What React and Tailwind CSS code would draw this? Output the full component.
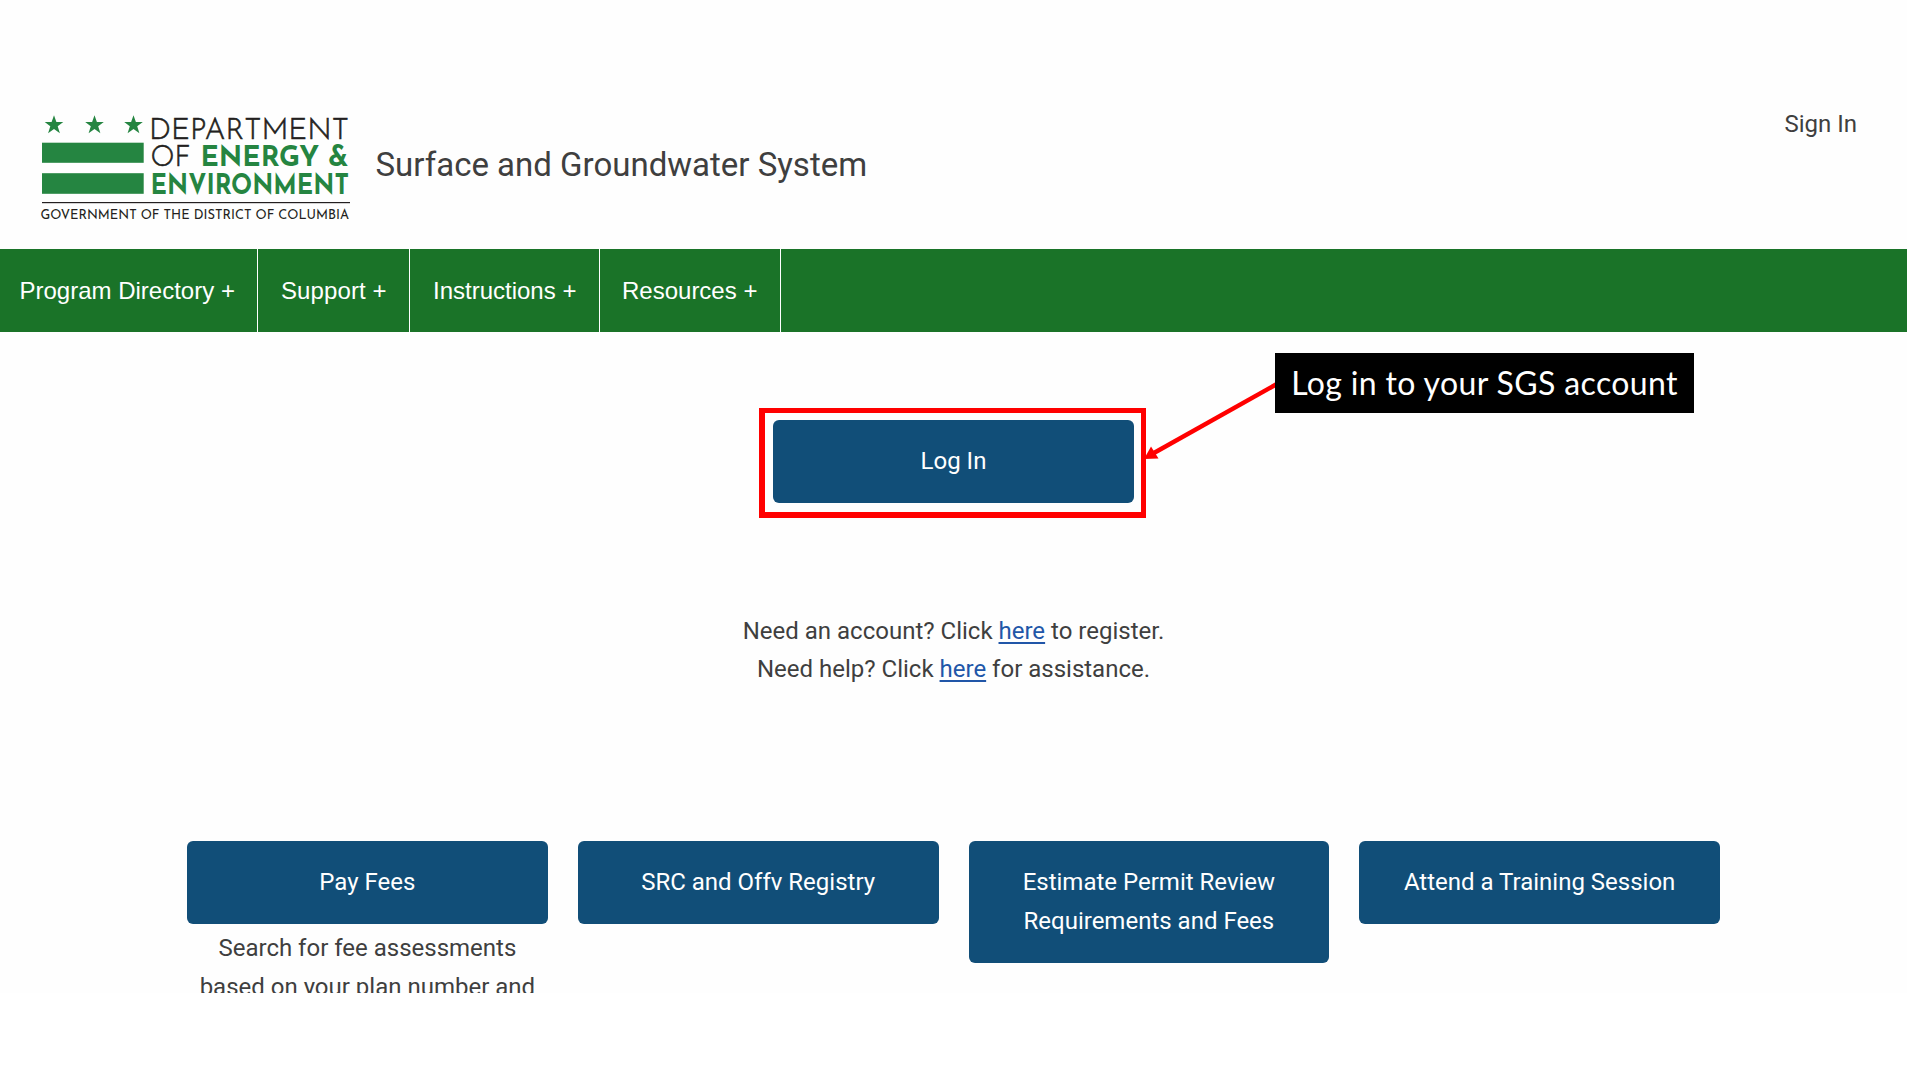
const star = "0,-9.8 2.4,-3 9.3,-3 3.7,1.2 5.9,8.2 0,4 -5.9,8.2 -3.7,1.2 -9.3,-3 -2.4,-3";

function Logo() {
  return (
    <svg className="block shrink-0 overflow-visible" width="310" height="112" viewBox="0 0 310 112" fontFamily="Josefin Sans, Lato, sans-serif">
      {[13, 53.5, 92.5].map((x) => (
        <polygon key={x} points={star} transform={`translate(${x} 15)`} fill="#258541" />
      ))}
      <rect x="1" y="32.7" width="101.7" height="20.1" fill="#258541" />
      <rect x="1" y="63.2" width="101.7" height="20.6" fill="#258541" />
      <text x="108" y="29" fontSize="30" fontWeight="350" fill="#231f20" stroke="#231f20" strokeWidth="0.6" textLength="200" lengthAdjust="spacingAndGlyphs">DEPARTMENT</text>
      <text x="109.5" y="55.5" fontSize="29" fontWeight="350" fill="#231f20" stroke="#231f20" strokeWidth="0.6" textLength="40" lengthAdjust="spacingAndGlyphs">OF</text>
      <text x="159.5" y="55.5" fontSize="29" fontWeight="700" fill="#258541" textLength="148" lengthAdjust="spacingAndGlyphs">ENERGY &amp;</text>
      <text x="109.5" y="84" fontSize="28.5" fontWeight="700" fill="#258541" textLength="198.5" lengthAdjust="spacingAndGlyphs">ENVIRONMENT</text>
      <rect x="1" y="92" width="308" height="1.2" fill="#231f20" />
      <text x="-0.5" y="108.5" fontSize="14.2" fill="#231f20" textLength="308.5" lengthAdjust="spacingAndGlyphs">
        GOVERNMENT OF THE DISTRICT OF COLUMBIA
      </text>
    </svg>
  );
}

function Header() {
  return (
    <header className="flex h-[249px] items-start pt-[105px] pl-[41px] pr-[50px]">
      <div className="mt-[5px]">
        <Logo />
      </div>
      <h1 className="ml-[24.5px] mt-[40px] whitespace-nowrap text-[33px] leading-[40px]">Surface and Groundwater System</h1>
      <a className="ml-auto whitespace-nowrap leading-[38px]">Sign In</a>
    </header>
  );
}

const navItems = [
  { label: "Program Directory +", cls: "w-[258px] pl-[19.5px]" },
  { label: "Support +", cls: "w-[152px] pl-[23px] tracking-[0.1px]" },
  { label: "Instructions +", cls: "w-[190px] pl-[23px]" },
  { label: "Resources +", cls: "w-[181px] pl-[22px]" },
];

function Nav() {
  return (
    <nav className="flex h-[83px] bg-[#1a7328] font-['Liberation_Sans',sans-serif] text-white">
      {navItems.map((n) => (
        <a key={n.label} className={`flex items-center whitespace-nowrap border-r border-white ${n.cls}`}>
          {n.label}
        </a>
      ))}
    </nav>
  );
}

function Button({ children }) {
  return (
    <button className="block w-full rounded-[6px] bg-[#114e78] px-[30px] py-[22px] text-center leading-[39px] text-white">
      {children}
    </button>
  );
}

function Callout() {
  return (
    <>
      <div className="absolute left-[759px] top-[76px] h-[110px] w-[387px] border-t-[5px] border-b-[6px] border-l-[6px] border-r-[5px] border-[#ff0000]" />
      <svg className="absolute left-[1140px] top-[40px]" width="140" height="100" viewBox="0 0 140 100">
        <line x1="136" y1="12.5" x2="13" y2="81.5" stroke="#ff0000" strokeWidth="4.5" />
        <polygon points="4,87 11,74.5 18.5,86.5" fill="#ff0000" />
      </svg>
      <div className="absolute left-[1275px] top-[21px] flex h-[60px] w-[419px] items-center justify-center whitespace-nowrap bg-black font-['Lato',sans-serif] text-[32px] tracking-[0.36px] text-white">
        Log in to your SGS account
      </div>
    </>
  );
}

const cards = [
  { title: ["Pay Fees"], text: ["Search for fee assessments", "based on your plan number and"] },
  { title: ["SRC and Offv Registry"] },
  { title: ["Estimate Permit Review", "Requirements and Fees"] },
  { title: ["Attend a Training Session"] },
];

function Here() {
  return <a className="text-[#2156a8] underline decoration-2 underline-offset-[3px]">here</a>;
}

export default function App() {
  return (
    <div className="h-[1073px] w-[1907px] overflow-hidden bg-white font-['Roboto',sans-serif] text-2xl text-[#3f3f3f]">
      <div className="h-[993px] overflow-hidden bg-[#fefefe]">
        <Header />
        <Nav />
        <main className="relative pt-[88px]">
          <div className="mx-auto w-[361px]">
            <Button>Log In</Button>
          </div>
          <Callout />
          <div className="mt-[109px] text-center leading-[38px]">
            <p>Need an account? Click <Here /> to register.</p>
            <p>Need help? Click <Here /> for assistance.</p>
          </div>
          <div className="mx-auto mt-[153px] grid w-[1533px] grid-cols-4 items-start gap-[30px]">
            {cards.map((c) => (
              <section key={c.title[0]}>
                <Button>
                  {c.title.map((t) => (
                    <span key={t} className="block whitespace-nowrap">{t}</span>
                  ))}
                </Button>
                {c.text && (
                  <div className="mt-[5px] text-center leading-[38.6px]">
                    {c.text.map((t) => (
                      <p key={t} className="whitespace-nowrap">{t}</p>
                    ))}
                  </div>
                )}
              </section>
            ))}
          </div>
        </main>
      </div>
    </div>
  );
}
